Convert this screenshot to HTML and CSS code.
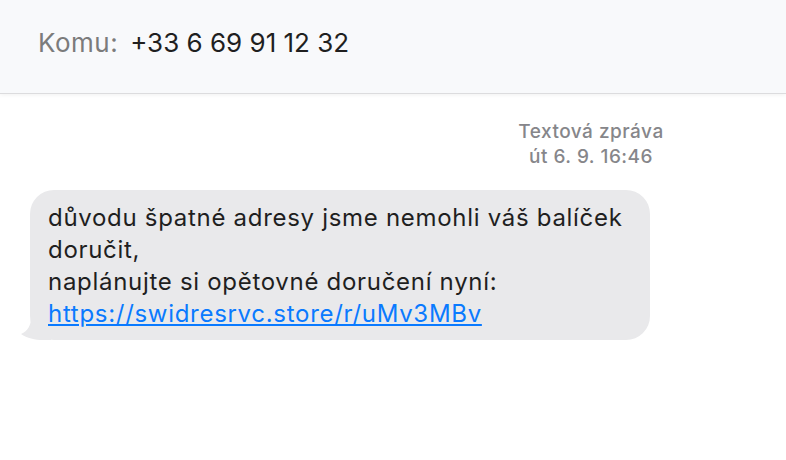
FILE: index.html
```html
<!DOCTYPE html>
<html lang="cs">
<head>
<meta charset="utf-8">
<link rel="stylesheet" href="styles.css">
</head>
<body>
<header class="to-bar">
  <span class="to-label">Komu:</span>
  <span class="to-number">+33 6 69 91 12 32</span>
</header>
<main class="thread">
  <div class="stamp">
    <div class="stamp-kind">Textová zpráva</div>
    <div class="stamp-time">út 6. 9. 16:46</div>
  </div>
  <div class="row">
    <div class="bubble">
      <svg class="tail" width="30" height="22" viewBox="0 0 30 22"><path d="M30 0 L30 22 L22 22 C14 22 6 20 0 16 C7 13 10 7 10 0 Z" fill="#e9e9eb"/></svg>
      <p class="msg">důvodu špatné adresy jsme nemohli váš balíček<br>doručit,<br>naplánujte si opětovné doručení nyní:<br><a href="#">https://swidresrvc.store/r/uMv3MBv</a></p>
    </div>
  </div>
</main>
</body>
</html>
```
FILE: styles.css
```css
html, body { margin: 0; padding: 0; background: #fff; }
body {
  font-family: Inter, "Noto Sans", "Liberation Sans", sans-serif;
  width: 786px; height: 460px; overflow: hidden;
}
.to-bar {
  height: 94px;
  box-sizing: border-box;
  background: #f8f9fb;
  border-bottom: 1px solid #dcdcde;
  box-shadow: 0 1px 4px rgba(0,0,0,0.06);
  display: flex;
  align-items: flex-start;
  padding: 28px 0 0 38px;
  font-size: 26px;
  line-height: 30px;
}
.to-label { color: #7b7b7b; margin-right: 12px; letter-spacing: 0.5px; }
.to-number { color: #1f1f1f; }
.thread { display: flex; flex-direction: column; }
.stamp {
  align-self: flex-end;
  width: 180px;
  margin-right: 105px;
  margin-top: 25px;
  text-align: center;
  color: #86868a;
  font-size: 19px;
  font-weight: 500;
  letter-spacing: 0.5px;
  line-height: 25px;
}
.row { padding-left: 30px; margin-top: 21px; }
.bubble {
  position: relative;
  display: inline-block;
  background: #e9e9eb;
  border-radius: 24px;
  padding: 12px 27px 10px 18px;
}
.tail { position: absolute; left: -9px; bottom: 0; }
.msg {
  position: relative;
  margin: 0;
  font-size: 24px;
  letter-spacing: 0.7px;
  line-height: 32px;
  color: #1f1f1f;
}
.msg a { color: #0a7aff; text-decoration: underline; }
```
